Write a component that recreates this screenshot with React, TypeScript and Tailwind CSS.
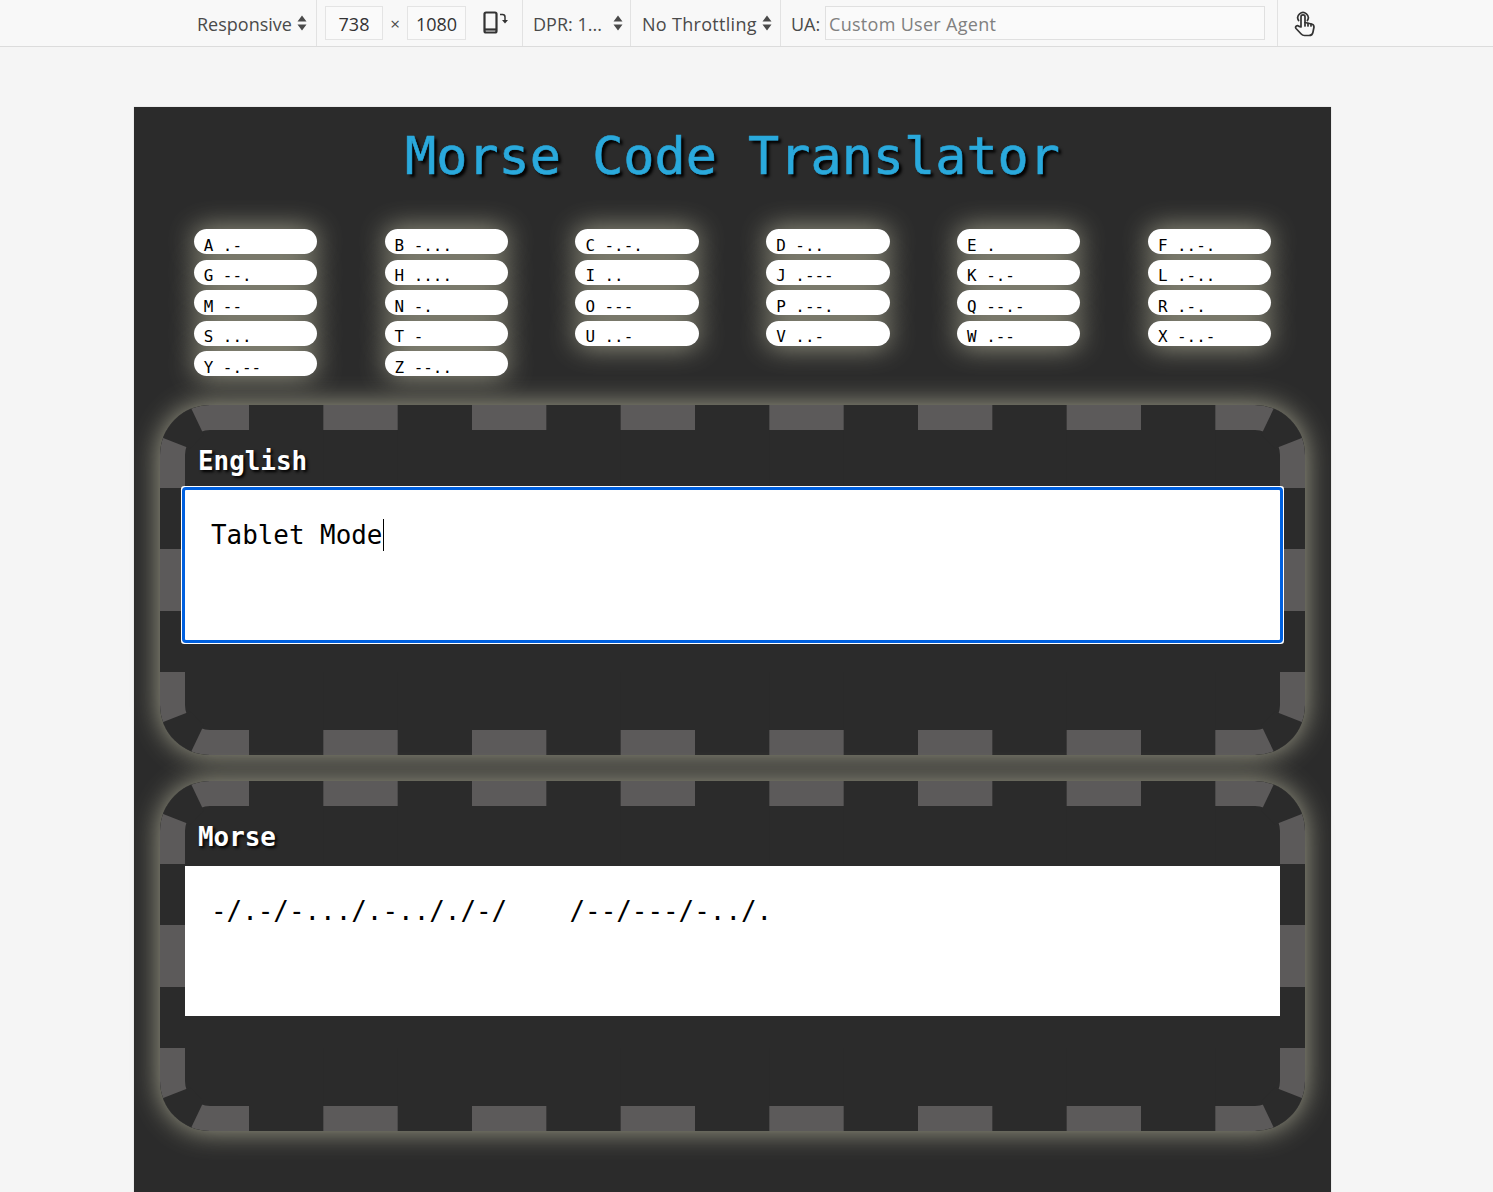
import React from 'react';

const morseChips = [
  'A .-', 'B -...', 'C -.-.', 'D -..', 'E .', 'F ..-.',
  'G --.', 'H ....', 'I ..', 'J .---', 'K -.-', 'L .-..',
  'M --', 'N -.', 'O ---', 'P .--.', 'Q --.-', 'R .-.',
  'S ...', 'T -', 'U ..-', 'V ..-', 'W .--', 'X -..-',
  'Y -.--', 'Z --..',
];

const SortArrows = () => (
  <svg width="10" height="16" viewBox="0 0 10 16" className="shrink-0 text-[#4a4a4a]">
    <path d="M5 0.5 L9.5 6.5 H0.5 Z M0.5 9.5 H9.5 L5 15.5 Z" fill="currentColor" />
  </svg>
);

const RotateIcon = () => (
  <svg width="26" height="24" viewBox="0 0 26 24" fill="none" className="text-[#333]">
    <rect x="1.5" y="1.5" width="12" height="20" rx="1.5" stroke="currentColor" strokeWidth="2.2" />
    <path d="M2 18.5 H13" stroke="currentColor" strokeWidth="2.2" />
    <path d="M17 3.5 H19.5 Q22 3.5 22 6 V10" stroke="currentColor" strokeWidth="1.5" />
    <path d="M19 9 H25 L22 12.5 Z" fill="currentColor" />
  </svg>
);

const TouchIcon = () => (
  <svg width="22" height="26" viewBox="0 0 22 26" fill="none" stroke="#333" strokeWidth="1.7" strokeLinejoin="round" strokeLinecap="round">
    <path d="M4.6 9.5 A5.2 5.2 0 1 1 13.4 9.5" />
    <path d="M7 16 V5.8 A2 2 0 0 1 11 5.8 V11.5 L17.5 13 Q20 13.6 20 16 L19 21 Q18.4 24.5 15 24.5 H10.5 Q8.5 24.5 7.2 23 L2 17.5 Q1 16 2.4 15 Q3.6 14.3 5 15.4 Z" />
    <path d="M11 11.5 V15 M14 12.4 V15 M17 13 V15" />
  </svg>
);

const Toolbar = () => (
  <div className="flex h-[47px] shrink-0 items-start border-b border-[#dcdcdc] bg-[#f8f8f8] font-['Open_Sans',sans-serif] text-[18px] text-[#4a4a4a]">
    <div className="flex h-[46px] w-[317px] items-center gap-[5px] border-r border-[#e2e2e2] pl-[197px]">
      <span className="pt-[2px]">Responsive</span>
      <SortArrows />
    </div>
    <div className="flex h-[46px] w-[206px] items-center border-r border-[#e2e2e2] pl-[8px]">
      <div className="flex h-[34px] w-[58px] items-center justify-center border border-[#e4e4e4] bg-[#fafafa] pt-[2px] text-[#333]">738</div>
      <span className="w-[24px] pt-[2px] text-center text-[17px]">×</span>
      <div className="flex h-[34px] w-[59px] items-center justify-center border border-[#e4e4e4] bg-[#fafafa] pt-[2px] text-[#333]">1080</div>
      <div className="ml-[17px]"><RotateIcon /></div>
    </div>
    <div className="flex h-[46px] w-[108px] items-center justify-between border-r border-[#e2e2e2] pl-[10px] pr-[7px]">
      <span className="pt-[2px]">DPR: 1...</span>
      <SortArrows />
    </div>
    <div className="flex h-[46px] w-[150px] items-center justify-between border-r border-[#e2e2e2] pl-[11px] pr-[8px]">
      <span className="pt-[2px] tracking-[0.3px]">No Throttling</span>
      <SortArrows />
    </div>
    <div className="flex h-[46px] w-[497px] items-center border-r border-[#e2e2e2] pl-[10px]">
      <span className="w-[34px] pt-[2px]">UA:</span>
      <div className="flex h-[34px] w-[440px] items-center border border-[#e0e0e0] bg-[#fafafa] pl-[3px] pt-[2px] tracking-[0.3px] text-[#808080]">Custom User Agent</div>
    </div>
    <div className="ml-[16px] mt-[11px]"><TouchIcon /></div>
  </div>
);

// the dashes in the picture are longer than what border-dashed gives, so the ring is drawn
const topGaps = [89, 237.67, 386.33, 535, 683.67, 832.33, 981];
const sideGaps = [83, 206];
const cornerTransforms = ['', 'translate(1145 0) scale(-1 1)', 'translate(0 350) scale(1 -1)', 'translate(1145 350) scale(-1 -1)'];

const DashedRing = () => (
  <svg
    viewBox="0 0 1145 350"
    className="absolute -inset-[25px] h-[350px] w-[1145px] rounded-[50px]"
  >
    <path
      fillRule="evenodd"
      fill="#5c5a5a"
      d="M50 0 H1095 A50 50 0 0 1 1145 50 V300 A50 50 0 0 1 1095 350 H50 A50 50 0 0 1 0 300 V50 A50 50 0 0 1 50 0 Z M50 25 A25 25 0 0 0 25 50 V300 A25 25 0 0 0 50 325 H1095 A25 25 0 0 0 1120 300 V50 A25 25 0 0 0 1095 25 Z"
    />
    <g fill="#2b2b2b">
      {topGaps.map((x) => (
        <rect key={x} x={x} y="0" width="74.33" height="350" />
      ))}
      {sideGaps.map((y) => (
        <rect key={y} x="0" y={y} width="1145" height="61" />
      ))}
      {cornerTransforms.map((t) => (
        <polygon key={t} transform={t} points="0,0 29.6,0 43.9,30 30,43.6 0,31.8" />
      ))}
    </g>
  </svg>
);

const TranslatorBox = ({ label, children }: { label: string; children: React.ReactNode }) => (
  <div className="relative h-[350px] rounded-[50px] border-[25px] border-transparent bg-[#2b2b2b] shadow-[0_0_28px_#a5a48f]">
    <DashedRing />
    <div className="relative flex h-[60px] items-center pl-[13px] pt-[3px] text-[25.9px] font-bold leading-none text-white [text-shadow:2px_2px_3px_#000]">
      {label}
    </div>
    <div className="relative">{children}</div>
  </div>
);

export default function App() {
  return (
    <div className="flex h-screen flex-col overflow-hidden bg-[#f5f5f5]">
      <Toolbar />
      <main className="pl-[134px] pt-[60px]">
        <div className="h-[1200px] w-[1197px] bg-[#2b2b2b] px-[26px] font-['DejaVu_Sans_Mono',monospace] shadow-[0_0_1px_#bbb]">
          <h1 className="flex h-[100px] items-center justify-center text-[51.8px] leading-none text-[#2aa9dc] [-webkit-text-stroke:0.6px_#2aa9dc] [text-shadow:3px_3px_3px_#000]">
            Morse Code Translator
          </h1>

          <div className="isolate mt-[22px] grid grid-cols-6 gap-y-[5.5px]">
            {morseChips.map((chip) => (
              <div
                key={chip}
                className="relative h-[25px] w-[123.4px] justify-self-center rounded-[13px] bg-white pl-[10px] pt-[6.5px] text-[15.9px] leading-[20px] text-black before:absolute before:inset-0 before:-z-10 before:rounded-[13px] before:shadow-[0_0_28px_#a5a48f] before:content-['']"
              >
                {chip}
              </div>
            ))}
          </div>

          <div className="mt-[29px] flex flex-col gap-[26px]">
            <TranslatorBox label="English">
              <div className="h-[150px] rounded-[1px] bg-white px-[26px] pt-[29px] text-[25.9px] leading-[32px] text-black shadow-[0_0_0_4px_#fff] outline-[3px] outline-[#0060df] [outline-style:solid]">
                <span>Tablet Mode</span>
                <span className="ml-px inline-block h-[32px] w-px bg-black align-top" />
              </div>
            </TranslatorBox>
            <TranslatorBox label="Morse">
              <div className="h-[150px] whitespace-pre bg-white px-[26px] pt-[29px] text-[25.9px] leading-[32px] text-black">
                {'-/.-/-.../.-.././-/    /--/---/-../.'}
              </div>
            </TranslatorBox>
          </div>
        </div>
      </main>
    </div>
  );
}
